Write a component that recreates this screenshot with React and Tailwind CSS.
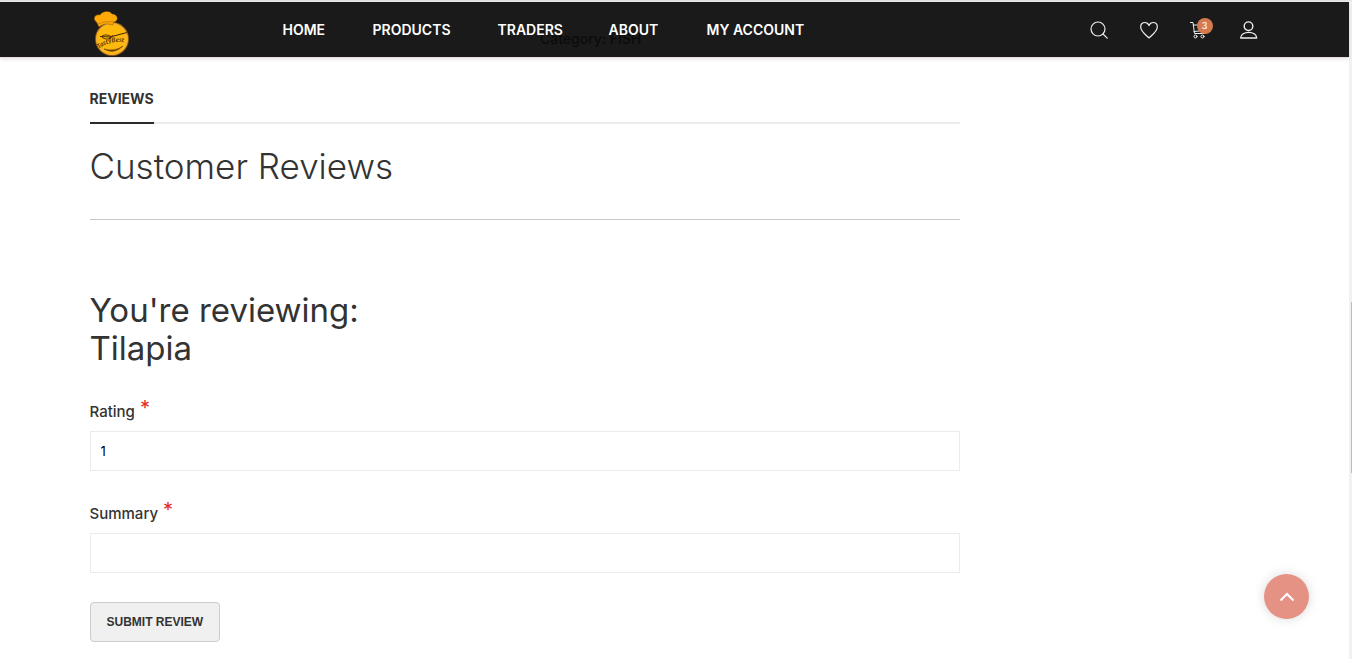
import { useState } from "react";

const links = ["HOME", "PRODUCTS", "TRADERS", "ABOUT", "MY ACCOUNT"];

function Logo() {
  return (
    <svg viewBox="0 0 36 46" className="h-[46px] w-9" aria-hidden="true">
      <circle cx="18" cy="28" r="17" fill="#8a5a14" />
      <circle cx="18" cy="28" r="16" fill="#ffb80c" />
      <circle cx="18" cy="28" r="15.5" fill="none" stroke="#e9a94a" strokeWidth="1" />
      <path d="M5 16 L2.500 11 C-2 8 1 3 6 4 C8 0 16 -1 18 3 C24 3 25 10 20 11 L18.500 14 C13 12 9 13 5 16 Z" fill="#ffa908" stroke="#7d4c08" strokeWidth=".5" />
      <path d="M4 13 C9 11 14 10 20 11" fill="none" stroke="#c27808" strokeWidth=".8" />
      <ellipse cx="12.500" cy="26" rx="4.200" ry="2" transform="rotate(8 12.500 26)" fill="none" stroke="#5a3507" strokeWidth="1" />
      <path d="M6 25.500 L17 26 M16 26 L33 21.500 M15 28 L19 24.500" fill="none" stroke="#4b2e08" strokeWidth="1.200" />
      <path id="logo-curve" d="M5 38 Q16 28 35 32" fill="none" />
      <text fontFamily="Lato, sans-serif" fontSize="6.500" fontStyle="italic" fontWeight="700" fill="#5b3808">
        <textPath href="#logo-curve">TastyBest</textPath>
      </text>
      <path d="M10 38 Q20 44 29 35 Q21 41 10 38" fill="#6e4308" stroke="#6e4308" strokeWidth=".6" />
    </svg>
  );
}

const iconClass = "h-[18px] w-[18px]";
const stroke = { fill: "none", stroke: "currentColor", strokeWidth: 1.2, strokeLinecap: "round", strokeLinejoin: "round" };

function Header() {
  return (
    <header className="relative h-14 border-b border-[#e9dde3] bg-[#1a1a1a] shadow-[0_1px_4px_rgba(0,0,0,0.12)]">
      <div className="mx-auto flex h-full max-w-[1170px] items-center">
        <a href="#home" aria-label="Home page" className="ml-1 flex h-full w-[189px] shrink-0 items-end"><Logo /></a>
        <nav className="relative z-10 grid grid-cols-[90px_125px_111px_98px_auto] text-sm font-semibold text-white">
          {links.map((l) => (
            <a key={l} href="#nav" className="whitespace-nowrap">{l}</a>
          ))}
        </nav>
        <div className="ml-auto flex items-center gap-8 pr-[2px] text-[#eee]">
          <button aria-label="Search">
            <svg viewBox="0 0 18 18" className={iconClass} {...stroke}><circle cx="8" cy="8" r="7" /><path d="M13 13 L17.2 17.2" /></svg>
          </button>
          <a href="#wishlist" aria-label="Wishlist">
            <svg viewBox="0 0 18 18" className={iconClass} {...stroke}><path d="M9 17 C7.5 15 .7 11 .7 6 C.7 3.200 2.600 1.500 4.900 1.500 C7 1.500 8.300 2.800 9 4.400 C9.700 2.800 11 1.500 13.100 1.500 C15.400 1.500 17.300 3.200 17.300 6 C17.300 11 10.500 15 9 17 Z" /></svg>
          </a>
          <a href="#cart" aria-label="Cart, 3 items" className="relative">
            <svg viewBox="0 0 18 18" className={iconClass} {...stroke} strokeWidth="1"><path d="M.5 1.500 H3 L4.500 12.500 H15.500 M3.300 4 H16.500 L15 9.500 L4 10.500" /><circle cx="5.500" cy="15.500" r="1.500" /><circle cx="12.500" cy="15.500" r="1.500" /></svg>
            <span className="absolute -top-[3px] left-[7px] flex h-4 w-4 items-center justify-center rounded-full bg-[#d5794f] text-[9px] font-medium text-white">3</span>
          </a>
          <a href="#account" aria-label="Account">
            <svg viewBox="0 0 18 18" className={iconClass} {...stroke} strokeWidth="1.400"><circle cx="8.500" cy="5.200" r="4.300" /><path d="M.7 17 C.7 9.500 16.700 9.500 16.700 17 Z" /></svg>
          </a>
        </div>
      </div>
      <p className="absolute top-[27px] left-[540px] text-sm leading-5 font-medium text-[#0b0b0b]">Category: FISH</p>
    </header>
  );
}

function Field({ id, label, value, onChange }) {
  return (
    <div className="mb-[29px]">
      <label htmlFor={id} className="flex h-[25px] items-end gap-[5px] text-[15px] leading-[22px] font-medium">
        {label} <span className="self-start text-xl leading-5 font-normal text-[#e02b27]">*</span>
      </label>
      <input
        id={id}
        value={value}
        onChange={(e) => onChange(e.target.value)}
        className="mt-2 block h-10 w-full border border-[#ebebeb] bg-white px-[10px] text-[13px] text-black outline-none"
      />
    </div>
  );
}

export default function App() {
  const [rating, setRating] = useState("1");
  const [summary, setSummary] = useState("");
  return (
    <div className="flex min-h-screen border-t border-[#dfe1e5] bg-white font-[Inter,sans-serif] text-[#333]">
      <div className="min-w-0 flex-1 border-t border-[#eef0f2]">
        <Header />
        <main className="mx-auto max-w-[1170px]">
          <div className="w-full max-w-[870px] pt-[29px]">
            <div className="flex border-b-2 border-[#ebebeb]">
              <h2 className="-mb-[2px] border-b-2 border-[#2b2b2b] pb-[11px] text-sm leading-6 font-bold">
                <a href="#reviews">REVIEWS</a>
              </h2>
            </div>
            <h1 className="border-b border-[#c8c8c8] pt-[22px] pb-[33px] text-[35px] leading-10 font-light">Customer Reviews</h1>
            <h2 className="mt-[71px] mb-[31px] text-[33px] leading-[38px]">
              You're reviewing:<br />Tilapia
            </h2>
            <form onSubmit={(e) => e.preventDefault()}>
              <Field id="rating" label="Rating" value={rating} onChange={setRating} />
              <Field id="summary" label="Summary" value={summary} onChange={setSummary} />
              <button type="submit" className="h-10 rounded-[4px] border border-[#ccc] bg-[#f0f0f0] px-4 font-['Liberation_Sans',sans-serif] text-xs font-bold">
                SUBMIT REVIEW
              </button>
            </form>
          </div>
        </main>
      </div>
      <div className="flex w-[3px] justify-end bg-[#f1f1f1]" aria-hidden="true">
        <div className="mt-[301px] h-[171px] w-px bg-[#bcbcbc]" />
      </div>
      <button
        aria-label="Back to top"
        className="fixed right-[43px] bottom-10 flex h-[45px] w-[45px] items-center justify-center rounded-full bg-[#e59285] text-white shadow-[0_0_12px_rgba(0,0,0,0.15)]"
      >
        <svg viewBox="0 0 16 10" className="h-[10px] w-4" fill="none" stroke="currentColor" strokeWidth="2"><path d="M1.500 8.500 L8 2 L14.500 8.500" /></svg>
      </button>
    </div>
  );
}
